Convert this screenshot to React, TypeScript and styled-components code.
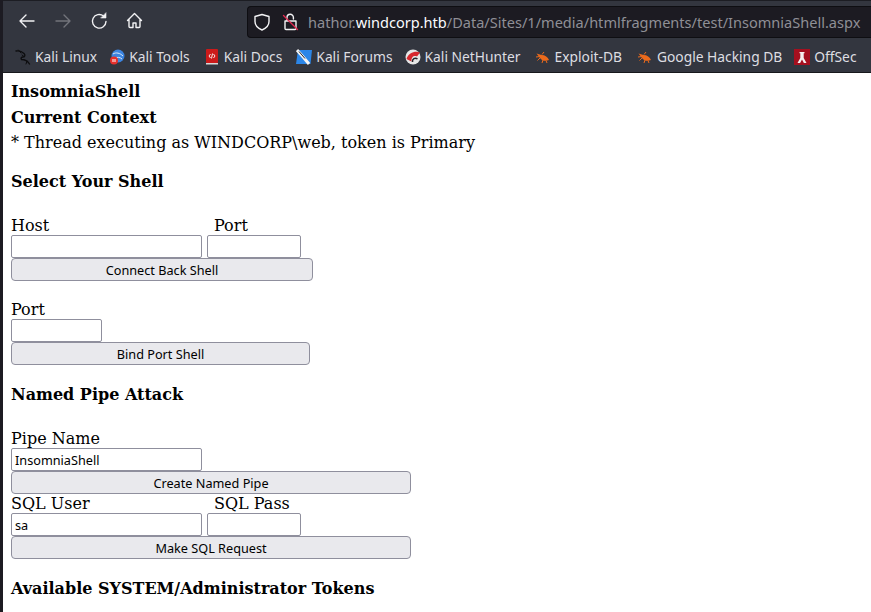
import React from "react";
import styled, { createGlobalStyle } from "styled-components";

const GlobalStyle = createGlobalStyle`
  html, body {
    margin: 0;
    padding: 0;
    height: 612px;
    overflow: hidden;
    background: #ffffff;
  }
`;

const Window = styled.div`
  width: 871px;
  height: 612px;
  box-sizing: border-box;
  overflow: hidden;
  display: flex;
  flex-direction: column;
  background: #ffffff;
  border-left: 3px solid #1c1b22;
`;

const Chrome = styled.div`
  height: 73px;
  flex: none;
  box-sizing: border-box;
  background: #33363f;
  border-top: 1px solid #1c1d23;
  border-bottom: 1px solid #17181c;
  font-family: "Noto Sans", "Open Sans", sans-serif;
`;

const Toolbar = styled.div`
  height: 40px;
  display: flex;
  align-items: center;
  padding-left: 14px;
  gap: 16px;
`;

const NavIcon = styled.svg<{ $dim?: boolean }>`
  width: 20px;
  height: 20px;
  flex: none;
  fill: none;
  stroke: ${(p) => (p.$dim ? "#73747b" : "#f2f2f4")};
  stroke-width: 1.4;
  stroke-linecap: round;
  stroke-linejoin: round;
`;

const UrlBar = styled.div`
  flex: 1;
  height: 32px;
  box-sizing: border-box;
  margin-left: 86px;
  margin-top: 2px;
  background: #1c1b22;
  border: 1px solid #0e0e12;
  border-right: none;
  border-radius: 4px 0 0 4px;
  display: flex;
  align-items: center;
  padding-left: 4px;
  gap: 8px;
  min-width: 0;
  white-space: nowrap;
`;

const Url = styled.div`
  font-size: 14.56px;
  color: #8f8f96;

  b {
    font-weight: 400;
    color: #fbfbfe;
  }
`;

const Bookmarks = styled.div`
  height: 31px;
  display: flex;
  align-items: center;
  padding-left: 12px;
  white-space: nowrap;
`;

const Bookmark = styled.div<{ $gap: number }>`
  display: flex;
  align-items: center;
  gap: 4px;
  margin-right: ${(p) => p.$gap}px;
  font-size: 13.8px;
  color: #dedee2;
`;

const Mark = styled.svg`
  width: 16px;
  height: 16px;
  flex: none;
`;

const Page = styled.div`
  flex: 1;
  padding: 7px 0 0 8px;
  font-family: "DejaVu Serif", serif;
  font-size: 16px;
  color: #000000;
`;

const Title = styled.div`
  font-weight: 700;
  height: 26px;
  line-height: 24px;
`;

const Line = styled.div`
  height: 26px;
  line-height: 22px;
`;

const SectionTitle = styled.div<{ $top: number }>`
  font-weight: 700;
  margin: ${(p) => p.$top}px 0 24px;
  height: 20px;
  line-height: 20px;
`;

const FieldRow = styled.div`
  display: flex;
  gap: 5px;
`;

const Field = styled.label`
  display: flex;
  flex-direction: column;
`;

const FieldLabel = styled.span<{ $indent?: boolean }>`
  height: 19px;
  line-height: 19px;
  padding-left: ${(p) => (p.$indent ? "7px" : "0")};
`;

const Input = styled.input<{ $w: number }>`
  display: block;
  width: ${(p) => p.$w}px;
  height: 23px;
  box-sizing: border-box;
  border: 1px solid #8f8f9d;
  border-radius: 2px;
  padding: 0 3px;
  background: #ffffff;
  color: #000000;
  font-family: "Noto Sans", sans-serif;
  font-size: 12.7px;
`;

const Submit = styled.button<{ $w: number; $after?: number }>`
  display: block;
  width: ${(p) => p.$w}px;
  height: 23px;
  box-sizing: border-box;
  margin-bottom: ${(p) => p.$after || 0}px;
  border: 1px solid #8f8f9d;
  border-radius: 4px;
  background: #e9e9ed;
  color: #000000;
  font-family: "Noto Sans", sans-serif;
  font-size: 12.7px;
  padding: 0;
`;

const Kali = () => (
  <Mark viewBox="0 0 16 16" fill="none" stroke="#0d0d0f" strokeWidth="1.4" strokeLinecap="round">
    <path d="M1 2c3-.5 6 .5 8 2.500 1.500 1.500 1 3.500-1 3.500-1.500 0-2.500 1-1.500 2.500 2 0 5.500.5 8 4.500" />
    <path d="M3.500 1l2.500 3M9 7.500L7 6M12 12l-1 3" strokeWidth="1" />
  </Mark>
);

const Tools = () => (
  <Mark viewBox="0 0 16 16">
    <circle cx="9" cy="7" r="6.500" fill="#3c84e0" />
    <path d="M4 5c3-2 7-1 10 2M6 9c2-1 5-1 7 1" stroke="#dcebfa" strokeWidth="1" fill="none" />
    <circle cx="5" cy="11.500" r="4" fill="#e5302c" />
    <path d="M4 10v3M6 10v3" stroke="#fff" strokeWidth="1" />
  </Mark>
);

const Docs = () => (
  <Mark viewBox="0 0 16 16">
    <rect x="2" y="0" width="12" height="14" rx="1" fill="#cc1a1a" />
    <rect x="2" y="14" width="12" height="1.500" fill="#d9d9d9" />
    <path d="M6.500 5L5 7l1.500 2M9.500 5L11 7 9.500 9M8.500 4.500l-1 5" stroke="#fff" strokeWidth="0.9" fill="none" />
  </Mark>
);

const Forums = () => (
  <Mark viewBox="0 0 16 16">
    <path d="M2 1h14l-1.500 14H0z" fill="#2b86e8" />
    <path d="M1 1l7 8 5 6" stroke="#f4f4f4" strokeWidth="3" fill="none" />
    <path d="M3 2.500l6 7" stroke="#26262b" strokeWidth="1" fill="none" />
  </Mark>
);

const NetHunter = () => (
  <Mark viewBox="0 0 16 16">
    <circle cx="8" cy="8" r="7.500" fill="#e6e6e6" />
    <path d="M1.500 10C3.500 4 10 1.500 15 3.500l-3 4C9 6 6 8 6.500 12.500z" fill="#d8292f" />
    <path d="M7.500 13c-.5-3 2.500-5 5-3" stroke="#26262b" strokeWidth="1.500" fill="none" />
  </Mark>
);

const Bug = () => (
  <Mark viewBox="0 0 16 16">
    <path d="M1.500 4.500l5 1.500c3.500 0 6.500 2 7.500 5-3 1.500-7 1-9-2z" fill="#ec6a1c" />
    <path d="M5 9l-2.500 2.500M8 11l-1 3M11 11.500l1 2.500M7 5.500l2-2.500M1 8l4-.5" stroke="#ec6a1c" strokeWidth="1" />
  </Mark>
);

const OffSec = () => (
  <Mark viewBox="0 0 16 16">
    <rect width="16" height="16" fill="#a5101f" />
    <path d="M5.500 3h5v1.200H9.700V9l2.800 5h-2.600L8 10.500 6.100 14H3.500l2.800-5V4.200h-.8z" fill="#f6f0f0" />
  </Mark>
);

const App = () => {
  return (
    <Window>
      <GlobalStyle />
      <Chrome>
        <Toolbar>
          <NavIcon viewBox="0 0 20 20">
            <path d="M17 10H3M9 4l-6 6 6 6" />
          </NavIcon>
          <NavIcon viewBox="0 0 20 20" $dim>
            <path d="M3 10h14M11 4l6 6-6 6" />
          </NavIcon>
          <NavIcon viewBox="0 0 20 20">
            <path d="M17 10.500A6.800 6.800 0 1 1 14.500 5" />
            <path d="M17 2v5h-5z" fill="#f2f2f4" strokeWidth="0.6" />
          </NavIcon>
          <NavIcon viewBox="0 0 20 20">
            <path d="M2.500 9.500l7-7 7 7M4 8.500V15.500a1 1 0 0 0 1 1h3V12h3v4.500h3a1 1 0 0 0 1-1V8.500" />
          </NavIcon>
          <UrlBar>
            <NavIcon viewBox="0 0 20 20">
              <path d="M10 2.500l7 2v5c0 4.500-3.500 7-7 8.500-3.500-1.500-7-4-7-8.500v-5z" />
            </NavIcon>
            <NavIcon viewBox="0 0 20 20">
              <path d="M7 9V5.500a3.200 3.200 0 0 1 6.400 0V7M5 9h11v7.500a1 1 0 0 1-1 1H6a1 1 0 0 1-1-1z" />
              <path d="M3.500 3.500l14 14" stroke="#e22850" />
            </NavIcon>
            <Url>
              hathor.<b>windcorp.htb</b>/Data/Sites/1/media/htmlfragments/test/InsomniaShell.aspx
            </Url>
          </UrlBar>
        </Toolbar>
        <Bookmarks>
          <Bookmark $gap={12}><Kali />Kali Linux</Bookmark>
          <Bookmark $gap={14}><Tools />Kali Tools</Bookmark>
          <Bookmark $gap={14}><Docs />Kali Docs</Bookmark>
          <Bookmark $gap={12}><Forums />Kali Forums</Bookmark>
          <Bookmark $gap={14}><NetHunter />Kali NetHunter</Bookmark>
          <Bookmark $gap={15}><Bug />Exploit-DB</Bookmark>
          <Bookmark $gap={12}><Bug />Google Hacking DB</Bookmark>
          <Bookmark $gap={0}><OffSec />OffSec</Bookmark>
        </Bookmarks>
      </Chrome>
      <Page>
        <Title>InsomniaShell</Title>
        <Title>Current Context</Title>
        <Line>* Thread executing as WINDCORP\web, token is Primary</Line>
        <SectionTitle $top={14}>Select Your Shell</SectionTitle>
        <FieldRow>
          <Field>
            <FieldLabel>Host</FieldLabel>
            <Input $w={191} />
          </Field>
          <Field>
            <FieldLabel $indent>Port</FieldLabel>
            <Input $w={94} />
          </Field>
        </FieldRow>
        <Submit $w={302} $after={19}>Connect Back Shell</Submit>
        <Field>
          <FieldLabel>Port</FieldLabel>
          <Input $w={91} />
        </Field>
        <Submit $w={299}>Bind Port Shell</Submit>
        <SectionTitle $top={20}>Named Pipe Attack</SectionTitle>
        <Field>
          <FieldLabel>Pipe Name</FieldLabel>
          <Input $w={191} defaultValue="InsomniaShell" />
        </Field>
        <Submit $w={400}>Create Named Pipe</Submit>
        <FieldRow>
          <Field>
            <FieldLabel>SQL User</FieldLabel>
            <Input $w={191} defaultValue="sa" />
          </Field>
          <Field>
            <FieldLabel $indent>SQL Pass</FieldLabel>
            <Input $w={94} />
          </Field>
        </FieldRow>
        <Submit $w={400}>Make SQL Request</Submit>
        <SectionTitle $top={20}>Available SYSTEM/Administrator Tokens</SectionTitle>
      </Page>
    </Window>
  );
};

export default App;
